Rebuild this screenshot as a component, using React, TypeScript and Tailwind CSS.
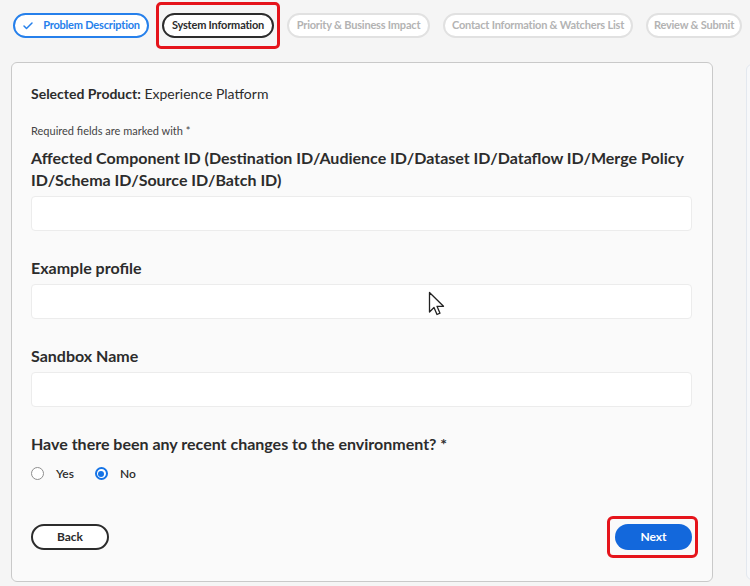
import { Check } from "lucide-react";

type Step = {
  label: string;
  state: "done" | "current" | "todo";
  width: string;
};

const steps: Step[] = [
  { label: "Problem Description", state: "done", width: "w-[136px]" },
  { label: "System Information", state: "current", width: "w-[112px]" },
  { label: "Priority & Business Impact", state: "todo", width: "w-[143px]" },
  { label: "Contact Information & Watchers List", state: "todo", width: "w-[190px]" },
  { label: "Review & Submit", state: "todo", width: "w-[96px]" },
];

function StepPill({ step }: { step: Step }) {
  const base = `flex h-[25px] ${step.width} shrink-0 items-center justify-center whitespace-nowrap rounded-full border-2 bg-white text-[11px] font-bold tracking-[-0.2px]`;
  if (step.state === "done") {
    return (
      <div className={`${base} gap-[9px] border-[#2680eb] text-[#2680eb]`}>
        <Check className="h-[12px] w-[12px]" strokeWidth={3} />
        {step.label}
      </div>
    );
  }
  if (step.state === "current") {
    // red highlight box around the current step
    return (
      <div className="-mx-[6px] -my-[11px] shrink-0 rounded-[5px] border-[3px] border-[#e5141b] px-[3px] py-[8px]">
        <div className={`${base} border-[#2c2c2c] text-[#2c2c2c]`}>{step.label}</div>
      </div>
    );
  }
  return <div className={`${base} border-[#e1e1e1] text-[#b3b3b3]`}>{step.label}</div>;
}

function Field({ label }: { label: string }) {
  return (
    <div>
      <label className="block text-[16px] font-bold leading-[22px] text-[#2c2c2c]">
        {label}
      </label>
      <input className="mt-[5px] block h-[35px] w-full rounded-[4px] border border-[#ececec] bg-white" />
    </div>
  );
}

function Cursor() {
  return (
    <svg
      className="pointer-events-none absolute left-[428px] top-[291px]"
      width="20"
      height="30"
      viewBox="0 0 20 30"
    >
      <path
        d="M1.5 1.5 L1.5 21 L6 16.5 L9 23.5 L12 22.2 L9 15.3 L15.5 15.3 Z"
        fill="white"
        stroke="#222"
        strokeWidth="1.3"
        strokeLinejoin="round"
      />
    </svg>
  );
}

export default function App() {
  return (
    <div
      className="relative h-[586px] w-[750px] overflow-hidden bg-[#f5f5f5]"
      style={{ fontFamily: "Lato, 'Open Sans', sans-serif" }}
    >
      {/* Stepper */}
      <div className="flex items-center gap-[13px] pl-[13px] pt-[13px]">
        {steps.map((s) => (
          <StepPill key={s.label} step={s} />
        ))}
      </div>

      <div className="mt-[24px] flex gap-[33px] pl-[11px]">
        {/* Form card */}
        <div className="h-[520px] w-[702px] shrink-0 rounded-[6px] border border-[#c9c9c9] bg-[#fafafa] pl-[19px] pr-[20px] pt-[20px]">
          <p className="text-[14px] text-[#2c2c2c]">
            <span className="font-bold">Selected Product:</span> Experience Platform
          </p>
          <p className="mt-[19px] text-[11px] text-[#444]">Required fields are marked with *</p>

          <div className="mt-[7px] flex flex-col gap-[26px]">
            <Field label="Affected Component ID (Destination ID/Audience ID/Dataset ID/Dataflow ID/Merge Policy ID/Schema ID/Source ID/Batch ID)" />
            <Field label="Example profile" />
            <Field label="Sandbox Name" />
          </div>

          <p className="mt-[26px] text-[16px] font-bold leading-[22px] text-[#2c2c2c]">
            Have there been any recent changes to the environment? *
          </p>
          <div className="mt-[10px] flex items-center text-[12px] font-semibold text-[#2c2c2c]">
            <span className="h-[13px] w-[13px] rounded-full border border-[#8e8e8e] bg-white" />
            <span className="ml-[12px]">Yes</span>
            <span className="ml-[21px] flex h-[13px] w-[13px] items-center justify-center rounded-full border-2 border-[#1473e6] bg-white">
              <span className="h-[6px] w-[6px] rounded-full bg-[#1473e6]" />
            </span>
            <span className="ml-[12px]">No</span>
          </div>

          <div className="mt-[33px] flex items-center justify-between">
            <button className="h-[26px] w-[78px] rounded-full border-2 border-[#2c2c2c] bg-white text-[12px] font-bold text-[#2c2c2c]">
              Back
            </button>
            <div className="-mr-[6px] rounded-[6px] border-[3px] border-[#e5141b] py-[5px] pl-[5px] pr-[3px]">
              <button className="block h-[26px] w-[77px] rounded-full bg-[#1368dc] text-[12px] font-bold text-white">
                Next
              </button>
            </div>
          </div>
        </div>

        {/* Side panel peeking in */}
        <div className="mt-[2px] h-[516px] w-[40px] shrink-0 rounded-[6px] border border-[#e3e8ef] bg-[#f7f8fa]" />
      </div>

      <Cursor />
    </div>
  );
}
